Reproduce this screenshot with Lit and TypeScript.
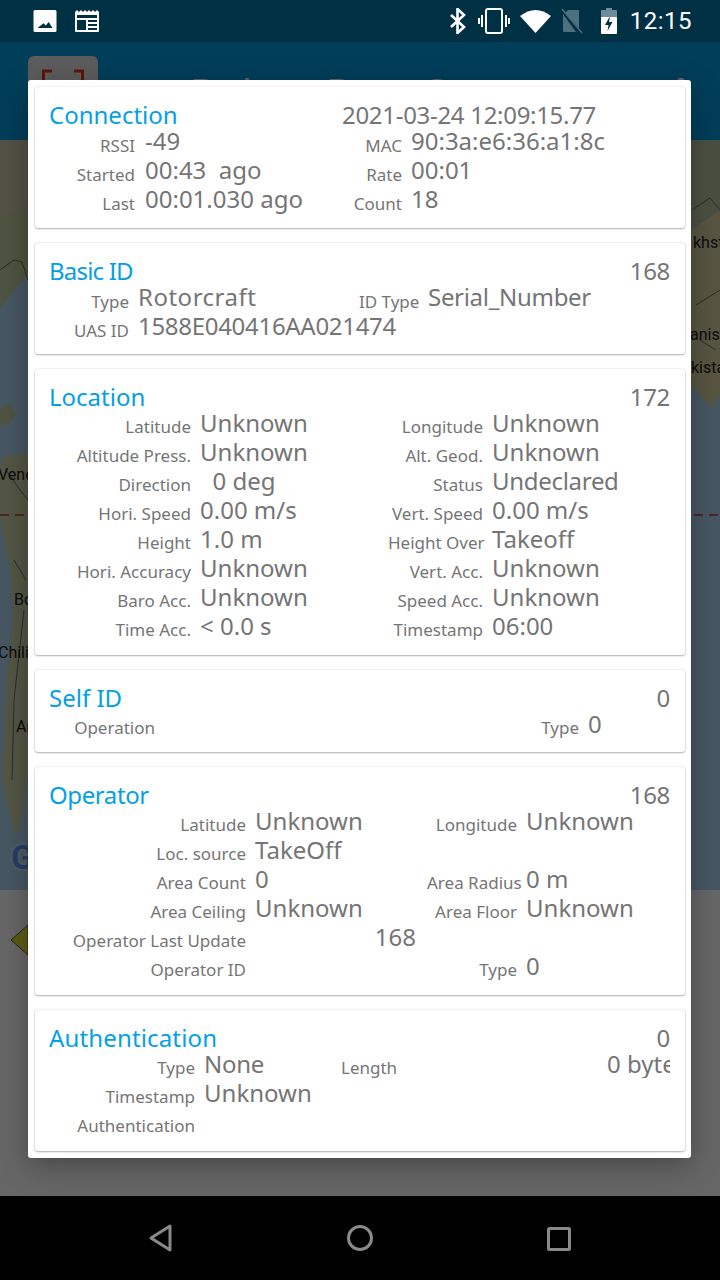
import { LitElement, html, css, svg } from "lit";
import { customElement } from "lit/decorators.js";

type Row = [string, string, string?, string?];

const CARDS: { id: string; title: string; right: string; rows: Row[] }[] = [
  {
    id: "conn",
    title: "Connection",
    right: "2021-03-24 12:09:15.77",
    rows: [
      ["RSSI", "-49", "MAC", "90:3a:e6:36:a1:8c"],
      ["Started", "00:43  ago", "Rate", "00:01"],
      ["Last", "00:01.030 ago", "Count", "18"],
    ],
  },
  {
    id: "basic",
    title: "Basic ID",
    right: "168",
    rows: [
      ["Type", "Rotorcraft", "ID Type", "Serial_Number"],
      ["UAS ID", "1588E040416AA021474"],
    ],
  },
  {
    id: "loc",
    title: "Location",
    right: "172",
    rows: [
      ["Latitude", "Unknown", "Longitude", "Unknown"],
      ["Altitude Press.", "Unknown", "Alt. Geod.", "Unknown"],
      ["Direction", "  0 deg", "Status", "Undeclared"],
      ["Hori. Speed", "0.00 m/s", "Vert. Speed", "0.00 m/s"],
      ["Height", "1.0 m", "Height Over", "Takeoff"],
      ["Hori. Accuracy", "Unknown", "Vert. Acc.", "Unknown"],
      ["Baro Acc.", "Unknown", "Speed Acc.", "Unknown"],
      ["Time Acc.", "< 0.0 s", "Timestamp", "06:00"],
    ],
  },
  {
    id: "self",
    title: "Self ID",
    right: "0",
    rows: [["Operation", "", "Type", "0"]],
  },
  {
    id: "oper",
    title: "Operator",
    right: "168",
    rows: [
      ["Latitude", "Unknown", "Longitude", "Unknown"],
      ["Loc. source", "TakeOff"],
      ["Area Count", "0", "Area Radius", "0 m"],
      ["Area Ceiling", "Unknown", "Area Floor", "Unknown"],
      ["Operator Last Update", "168"],
      ["Operator ID", "", "Type", "0"],
    ],
  },
  {
    id: "auth",
    title: "Authentication",
    right: "0",
    rows: [
      ["Type", "None", "Length", "0 byte"],
      ["Timestamp", "Unknown"],
      ["Authentication", ""],
    ],
  },
];

const TIGHT = new Set(["1588E040416AA021474", "Serial_Number", "Undeclared", "None"]);
const WIDE = new Set(["Rotorcraft"]);

@customElement("app-root")
export class AppRoot extends LitElement {
  static styles = css`
    :host {
      display: block;
      position: relative;
      width: 720px;
      height: 1280px;
      overflow: hidden;
      font-family: "Noto Sans", sans-serif;
      background: #000;
    }
    .screen {
      display: flex;
      flex-direction: column;
      height: 1196px;
    }
    .status-space {
      height: 42px;
      background: #0078aa;
    }
    .appbar {
      height: 98px;
      background: #009be0;
      position: relative;
    }
    .scan {
      position: absolute;
      left: 28px;
      top: 14px;
      width: 70px;
      height: 70px;
      border-radius: 6px;
      background: #e6e6e6;
    }
    .scan svg {
      display: block;
    }
    .app-title {
      position: absolute;
      left: 190px;
      top: 27px;
      font-size: 40px;
      line-height: 48px;
      color: #fff;
      white-space: nowrap;
    }
    .menu-dot {
      position: absolute;
      left: 677px;
      top: 36px;
      width: 8px;
      height: 8px;
      border-radius: 50%;
      background: #fff;
    }
    .map {
      height: 750px;
      position: relative;
      background: #aed9f7;
      overflow: hidden;
    }
    .map svg {
      display: block;
    }
    .map span {
      position: absolute;
      font-size: 16px;
      color: #222;
      font-family: "Roboto", sans-serif;
    }
    .map .g {
      left: 11px;
      top: 700px;
      font-size: 33px;
      line-height: 36px;
      font-weight: 700;
      color: #5c98ff;
      text-shadow: 0 0 4px #fff;
    }
    .panel {
      flex: 1;
      background: #fff;
      position: relative;
    }
    .panel svg {
      position: absolute;
      left: 10px;
      top: 34px;
    }
    .scrim {
      position: absolute;
      left: 0;
      top: 0;
      width: 720px;
      height: 1196px;
      background: rgba(0, 0, 0, 0.6);
    }
    .statusbar {
      position: absolute;
      left: 0;
      top: 0;
      width: 720px;
      height: 42px;
      display: flex;
      align-items: center;
      padding: 0 28px 0 33px;
      box-sizing: border-box;
      color: #fff;
    }
    .statusbar svg {
      display: block;
      flex: none;
    }
    .clock {
      font-family: "Roboto", sans-serif;
      font-size: 24px;
      margin-left: 13px;
      letter-spacing: 0.5px;
    }
    .spacer {
      flex: 1;
    }
    .dialog {
      position: absolute;
      left: 28px;
      top: 80px;
      width: 663px;
      height: 1078px;
      box-sizing: border-box;
      background: #fff;
      border-radius: 3px;
      padding: 7px 6px 7px 7px;
      display: flex;
      flex-direction: column;
      gap: 15px;
      box-shadow: 0 8px 30px rgba(0, 0, 0, 0.3);
      overflow: hidden;
    }
    .card {
      box-sizing: border-box;
      background: #fff;
      border-radius: 3px;
      box-shadow: 0 0 2px rgba(0, 0, 0, 0.18), 0 1px 2px rgba(0, 0, 0, 0.28);
      padding: 12px 15px 0 14px;
      overflow: hidden;
      flex: none;
    }
    .head {
      display: flex;
      justify-content: space-between;
      height: 32px;
    }
    .title {
      font-size: 24px;
      line-height: 32px;
      color: #03a0e6;
    }
    .right {
      font-size: 24px;
      line-height: 32px;
      color: #757575;
      white-space: nowrap;
      letter-spacing: -0.3px;
    }
    .grid {
      display: grid;
      grid-auto-rows: 29px;
      align-items: start;
      margin-top: -5px;
    }
    .label {
      font-size: 17px;
      line-height: 29px;
      padding-top: 4px;
      color: #757575;
      text-align: right;
      white-space: nowrap;
    }
    .value {
      font-size: 24px;
      line-height: 29px;
      color: #757575;
      white-space: pre;
      padding-left: 9px;
    }
    .value.tight {
      letter-spacing: -0.3px;
    }
    .value.wide {
      letter-spacing: 0.5px;
    }
    .conn { height: 141px; }
    .conn .head { justify-content: flex-start; }
    .conn .title { width: 293px; }
    .conn .grid { grid-template-columns: 86px 207px 60px 1fr; }
    .conn .label { padding-top: 5px; }
    .conn .value { padding-left: 10px; }
    .conn .value.v2 { padding-left: 9px; }
    .basic { height: 111px; }
    .basic .title { letter-spacing: -0.8px; }
    .basic .grid { grid-template-columns: 80px 230px 60px 1fr; }
    .basic .label { padding-top: 5px; }
    .loc { height: 286px; }
    .loc .grid { grid-template-columns: 142px 197px 95px 1fr; }
    .self { height: 82px; }
    .self .grid { grid-template-columns: 106px 384px 40px 1fr; }
    .oper { height: 228px; }
    .oper .title { letter-spacing: -0.4px; }
    .oper .grid { grid-template-columns: 197px 181px 90px 1fr; }
    .oper .far { text-align: right; padding-right: 11px; }
    .auth { height: 141px; }
    .auth .title { letter-spacing: 0.15px; }
    .auth .grid { grid-template-columns: 146px 146px 56px 1fr; }
    .auth .v2 { padding-left: 210px; overflow: hidden; }
    .nav {
      position: absolute;
      left: 0;
      top: 1196px;
      width: 720px;
      height: 84px;
      background: #000;
    }
    .nav svg {
      display: block;
    }
  `;

  private valueClass(v: string) {
    return TIGHT.has(v) ? "tight" : WIDE.has(v) ? "wide" : "";
  }

  private renderRows(c: (typeof CARDS)[number]) {
    return c.rows.map((r) => {
      const [l1, v1, l2, v2] = r;
      const far = l1 === "Operator Last Update";
      return html`
        <div class="label">${l1}</div>
        <div class="value ${far ? "far" : ""} ${this.valueClass(v1)}">${v1}</div>
        ${l2
          ? html`<div class="label">${l2}</div>
              <div class="value v2 ${this.valueClass(v2 ?? "")}">${v2}</div>`
          : html`<div></div><div></div>`}
      `;
    });
  }

  // only the two strips beside the dialog ever show, so the land is rough
  private mapLand() {
    return svg`
      <svg width="720" height="750" viewBox="0 0 720 750">
        <path d="M0 0H28V135L14 150L0 169Z" fill="#c6d0a4"/>
        <path d="M0 0H28V60L0 80Z" fill="#cfcdb0"/>
        <path d="M0 268L10 264L16 274L8 285L0 284Z" fill="#c6d0a4"/>
        <path d="M4 316L28 312V640L20 690L14 694L2 640L4 590L8 520L13 470L10 430L0 376V325Z" fill="#d0d6ac"/>
        <path d="M691 0H720V255L712 267L702 258L691 245Z" fill="#dcd4a6"/>
        <path d="M691 0H720V70L691 90Z" fill="#b8c9a4"/>
        <path d="M0 375H28M694 375H720" stroke="#c0392b" stroke-width="1.4" stroke-dasharray="9 6"/>
        <path d="M6 330L20 350L28 360M14 420L26 440M24 470L14 560L12 640M0 130L14 120L22 122L28 140" fill="none" stroke="#555" stroke-width="0.8"/>
        <path d="M692 70L710 58L720 70M696 165L720 150M700 200L716 210" fill="none" stroke="#555" stroke-width="0.8"/>
      </svg>
    `;
  }

  render() {
    return html`
      <div class="screen">
        <div class="status-space"></div>
        <div class="appbar">
          <div class="scan">
            <svg width="70" height="70" viewBox="0 0 70 70">
              <path d="M15.500 26V15H24M46 15H54.500V26" fill="none" stroke="#f0300f" stroke-width="3"/>
            </svg>
          </div>
          <div class="app-title">Debug Data Screen</div>
          <div class="menu-dot"></div>
        </div>
        <div class="map">
          ${this.mapLand()}
          <span style="left:-2px;top:325px">Vene</span>
          <span style="left:14px;top:450px">Bo</span>
          <span style="left:-2px;top:503px">Chili</span>
          <span style="left:16px;top:577px">Ar</span>
          <span class="g">G</span>
          <span style="left:693px;top:93px">khsta</span>
          <span style="left:690px;top:185px">anist</span>
          <span style="left:691px;top:218px">kista</span>
        </div>
        <div class="panel">
          <svg width="20" height="32" viewBox="0 0 20 32">
            <path d="M1 16L18 1V31Z" fill="#e6e632" stroke="#333" stroke-width="0.8"/>
          </svg>
        </div>
      </div>
      <div class="scrim"></div>
      <div class="statusbar">
        <svg width="24" height="24" viewBox="0 0 24 24" fill="#fff">
          <path d="M2 1h20a1.500 1.500 0 0 1 1.500 1.500v19a1.500 1.500 0 0 1-1.500 1.500H2a1.500 1.500 0 0 1-1.500-1.500v-19A1.500 1.500 0 0 1 2 1Zm2.500 18h15l-3.800-6-2.900 3.500-2.300-2.300Z" fill-rule="evenodd"/>
        </svg>
        <svg style="margin-left:17px" width="26" height="24" viewBox="0 0 26 24" fill="#fff">
          <path d="M1 3l2-2 2 2 2-2 2 2 2-2 2 2 2-2 2 2 2-2 2 2 2-2 2 2v19a1 1 0 0 1-1 1H2a1 1 0 0 1-1-1Zm2 3v3h20V6Zm0 5v10h9V11Zm11 0v2h9v-2Zm0 4v2h9v-2Zm0 4v2h9v-2Z" fill-rule="evenodd"/>
        </svg>
        <div class="spacer"></div>
        <svg width="17" height="26" viewBox="0 0 17 26" fill="none" stroke="#fff" stroke-width="2.600">
          <path d="M2 7l13 12-6.500 6V1L15 7 2 19"/>
        </svg>
        <svg style="margin-left:12px" width="32" height="26" viewBox="0 0 32 26" fill="none" stroke="#fff" stroke-width="2">
          <rect x="8" y="1" width="16" height="24" rx="2"/>
          <path d="M4 7v12M1 10v6M28 7v12M31 10v6"/>
        </svg>
        <svg style="margin-left:10px" width="31" height="24" viewBox="0 0 31 24" fill="#fff">
          <path d="M0 7Q15.500-5 31 7L15.500 24Z"/>
        </svg>
        <svg style="margin-left:10px" width="22" height="26" viewBox="0 0 22 26">
          <path d="M7 2h10a1 1 0 0 1 1 1v17L4 5ZM2 6l13 18H3a1 1 0 0 1-1-1Z" fill="#4d707f"/>
          <path d="M1 1l20 24" stroke="#4d707f" stroke-width="1.400"/>
        </svg>
        <svg style="margin-left:18px" width="16" height="26" viewBox="0 0 16 26">
          <path d="M5 0h6v2h4a1 1 0 0 1 1 1v6H0V3a1 1 0 0 1 1-1h4Z" fill="#6d8c99"/>
          <path d="M0 9h16v16a1 1 0 0 1-1 1H1a1 1 0 0 1-1-1ZM9 8l-5 9h3.500l-1 6 5-9H8Z" fill="#fff" fill-rule="evenodd"/>
        </svg>
        <div class="clock">12:15</div>
      </div>
      <div class="dialog">
        ${CARDS.map(
          (c) => html`
            <div class="card ${c.id}">
              <div class="head">
                <div class="title">${c.title}</div>
                <div class="right">${c.right}</div>
              </div>
              <div class="grid">${this.renderRows(c)}</div>
            </div>
          `
        )}
      </div>
      <div class="nav">
        <svg width="720" height="84" viewBox="0 0 720 84" fill="none" stroke="#8a8a8a" stroke-width="3">
          <path d="M170 30L151 42L170 54Z" stroke-linejoin="round"/>
          <circle cx="360" cy="42" r="11.500"/>
          <rect x="548.500" y="32.500" width="21" height="21" rx="1"/>
        </svg>
      </div>
    `;
  }
}
